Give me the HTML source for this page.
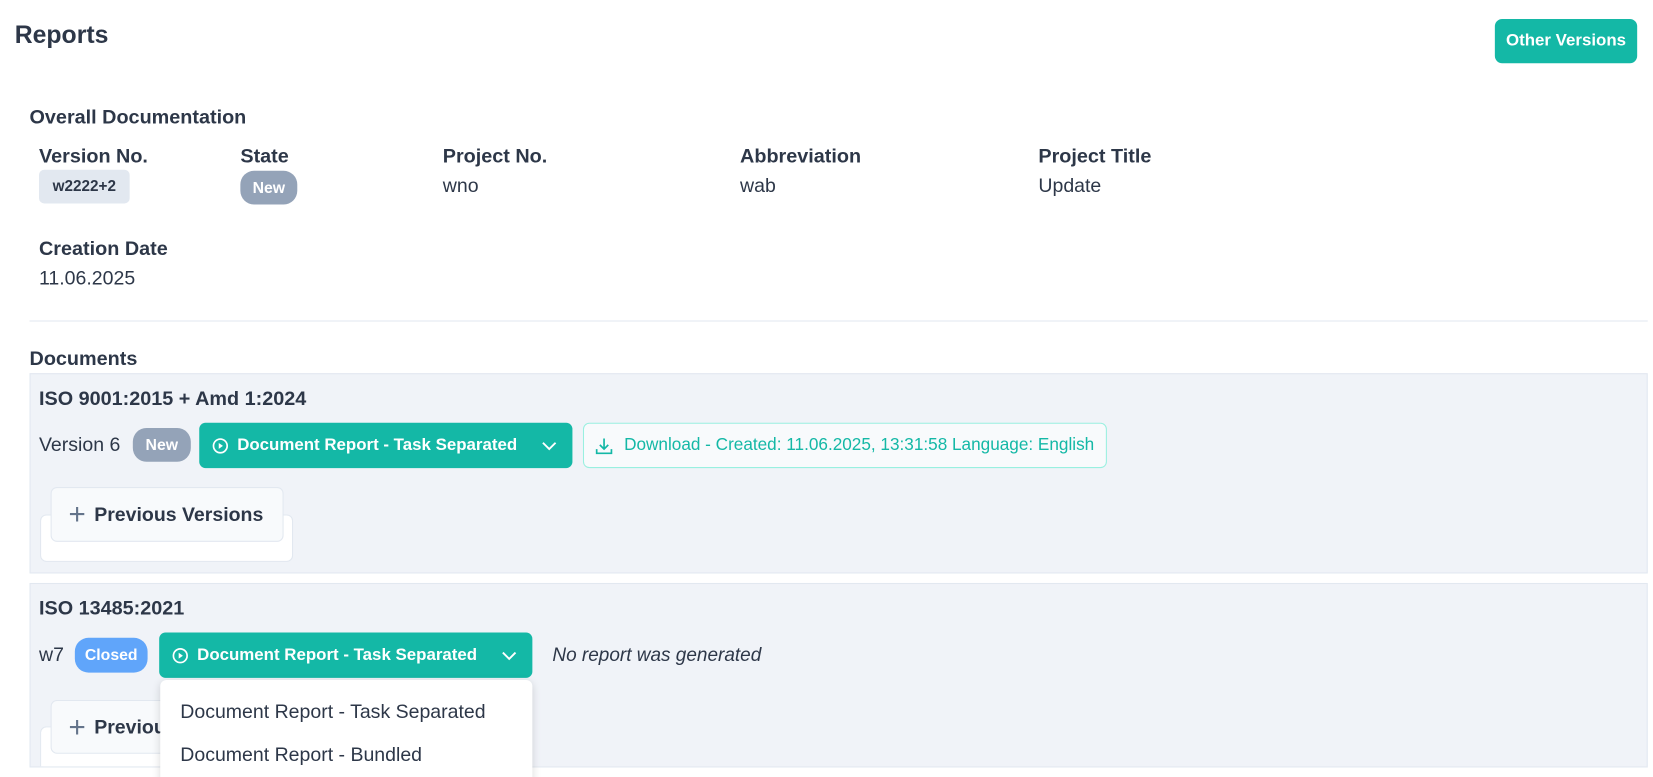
<!DOCTYPE html>
<html style="overflow:hidden;height:777px"><head><meta charset="utf-8"><style>
*{box-sizing:border-box;margin:0;padding:0}
body{width:1653px;height:777px;overflow:hidden;background:#fff;font-family:"Liberation Sans",sans-serif;color:#2d3748;position:relative}
#w{position:absolute;left:0;top:0;width:1568px;height:737px;overflow:hidden;transform:scale(1.0542);transform-origin:0 0}
.a{position:absolute;white-space:nowrap}
.b{font-weight:bold}
.lbl{font-weight:bold;font-size:18.8px;line-height:20px}
.val{font-size:18.5px;line-height:20px}
.badge{position:absolute;border-radius:13px;color:#fff;font-weight:bold;font-size:15px;display:flex;align-items:center;justify-content:center}
.card{position:absolute;left:28px;width:1535px;background:#f0f3f8;border:1px solid #e2e8f0}
.tbtn{position:absolute;background:#14b8a6;border-radius:6px;color:#fff;font-weight:bold;font-size:16px;display:flex;align-items:center;padding-left:12px}
.tbtn svg.chev{position:absolute;right:14px}
.pvb{position:absolute;background:#fff;border:1px solid #e2e8f0;border-radius:6px}
.pvf{position:absolute;background:#f8fafc;border:1px solid #e2e8f0;border-radius:6px;font-weight:bold;font-size:18.5px;display:flex;align-items:center;padding-left:16px;color:#2d3748}
</style></head><body><div id="w">
<div class="a b" style="left:14px;top:20px;font-size:23.5px">Reports</div>
<div class="a b" style="left:1418px;top:18px;width:135px;height:42px;background:#14b8a6;border-radius:7px;color:#fff;font-size:16px;display:flex;align-items:center;justify-content:center">Other Versions</div>
<div class="a lbl" style="left:28px;top:101px">Overall Documentation</div>
<div class="a lbl" style="left:37px;top:138px">Version No.</div>
<div class="a lbl" style="left:228px;top:138px">State</div>
<div class="a lbl" style="left:420px;top:138px">Project No.</div>
<div class="a lbl" style="left:702px;top:138px">Abbreviation</div>
<div class="a lbl" style="left:985px;top:138px">Project Title</div>
<div class="a" style="left:37px;top:161px;width:86px;height:32px;background:#e2e8f0;border-radius:5px;font-weight:bold;font-size:14.5px;display:flex;align-items:center;justify-content:center">w2222+2</div>
<div class="badge" style="left:228px;top:162px;width:54px;height:32px;background:#94a3b8">New</div>
<div class="a val" style="left:420px;top:166px">wno</div>
<div class="a val" style="left:702px;top:166px">wab</div>
<div class="a val" style="left:985px;top:166px">Update</div>
<div class="a lbl" style="left:37px;top:226px">Creation Date</div>
<div class="a val" style="left:37px;top:254px">11.06.2025</div>
<div class="a" style="left:28px;top:304px;width:1535px;height:1px;background:#e2e8f0"></div>
<div class="a lbl" style="left:28px;top:330px">Documents</div>

<div class="card" style="top:354px;height:190px"></div>
<div class="a lbl" style="left:37px;top:368px">ISO 9001:2015 + Amd 1:2024</div>
<div class="a val" style="left:37px;top:412px">Version 6</div>
<div class="badge" style="left:126px;top:406px;width:55px;height:32px;background:#94a3b8">New</div>
<div class="tbtn" style="left:189px;top:401px;width:354px;height:43px">
<svg width="16" height="16" viewBox="0 0 16 16" style="margin-right:8px"><circle cx="8" cy="8" r="6.5" fill="none" stroke="#fff" stroke-width="1.6"/><path d="M6.5 5.2L10.5 8L6.5 10.8Z" fill="#fff"/></svg>Document Report - Task Separated
<svg class="chev" width="16" height="10" viewBox="0 0 16 10"><path d="M2 2L8 8L14 2" fill="none" stroke="#fff" stroke-width="1.8"/></svg></div>
<div class="a" style="left:553px;top:401px;width:497px;height:43px;background:#f8fafc;border:1px solid #99f0e0;border-radius:6px;color:#14b8a6;font-size:16.3px;display:flex;align-items:center;padding-left:9px">
<svg width="20" height="20" viewBox="0 0 20 20" style="margin-right:9px"><path d="M10 3V13M6 9L10 13L14 9M3 13V17H17V13" fill="none" stroke="#14b8a6" stroke-width="1.6"/></svg>Download - Created: 11.06.2025, 13:31:58 Language: English</div>
<div class="pvb" style="left:38px;top:488px;width:240px;height:45px"></div>
<div class="pvf" style="left:48px;top:462px;width:221px;height:52px"><span style="font-weight:normal;font-size:28px;color:#64748b;margin-right:8px;line-height:20px">+</span>Previous Versions</div>

<div class="card" style="top:553px;height:175px"></div>
<div class="a lbl" style="left:37px;top:567px">ISO 13485:2021</div>
<div class="a val" style="left:37px;top:611px">w7</div>
<div class="badge" style="left:71px;top:605px;width:69px;height:33px;background:#60a5fa">Closed</div>
<div class="tbtn" style="left:151px;top:600px;width:354px;height:43px">
<svg width="16" height="16" viewBox="0 0 16 16" style="margin-right:8px"><circle cx="8" cy="8" r="6.5" fill="none" stroke="#fff" stroke-width="1.6"/><path d="M6.5 5.2L10.5 8L6.5 10.8Z" fill="#fff"/></svg>Document Report - Task Separated
<svg class="chev" width="16" height="10" viewBox="0 0 16 10"><path d="M2 2L8 8L14 2" fill="none" stroke="#fff" stroke-width="1.8"/></svg></div>
<div class="a val" style="left:524px;top:611px;font-style:italic;font-size:18px">No report was generated</div>
<div class="pvb" style="left:38px;top:689px;width:240px;height:38px;border-bottom:none;border-radius:6px 6px 0 0"></div>
<div class="pvf" style="left:48px;top:664px;width:221px;height:51px"><span style="font-weight:normal;font-size:28px;color:#64748b;margin-right:8px;line-height:20px">+</span>Previous Versions</div>
<div class="a" style="left:152px;top:645px;width:353px;height:110px;background:#fff;border-radius:6px;box-shadow:0 2px 8px rgba(0,0,0,.15)">
<div class="a val" style="left:19px;top:20px">Document Report - Task Separated</div>
<div class="a val" style="left:19px;top:61px">Document Report - Bundled</div>
</div>
</div></body></html>
